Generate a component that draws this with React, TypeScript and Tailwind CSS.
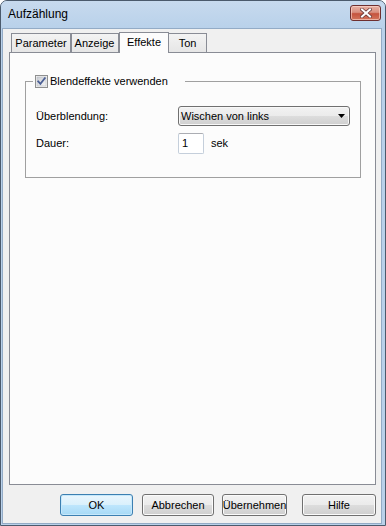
import React from "react";

function Checkbox() {
  return (
    <svg width="13" height="13" viewBox="0 0 13 13" className="block">
      <defs>
        <linearGradient id="cbg" x1="0" y1="0" x2="1" y2="1">
          <stop offset="0" stopColor="#c9ccd2" />
          <stop offset="1" stopColor="#f6f6f6" />
        </linearGradient>
      </defs>
      <rect x="0.5" y="0.5" width="12" height="12" fill="#f4f4f4" stroke="#8e8f8f" />
      <rect x="2" y="2" width="9" height="9" fill="url(#cbg)" stroke="#b8bcc4" strokeWidth="0.6" />
      <path d="M3.2 6.4 L5.4 8.8 L9.8 3.2" fill="none" stroke="#4b5f95" strokeWidth="1.8" strokeLinecap="square" />
    </svg>
  );
}

function CloseGlyph() {
  return (
    <svg width="12" height="10" viewBox="0 0 12 10" className="block">
      <path d="M2 1.5 L10 8.5 M10 1.5 L2 8.5" stroke="#6b3b3b" strokeWidth="3.6" strokeLinecap="square" />
      <path d="M2 1.5 L10 8.5 M10 1.5 L2 8.5" stroke="#ffffff" strokeWidth="2" strokeLinecap="square" />
    </svg>
  );
}

const btn =
  "h-[22px] flex items-center justify-center rounded-[3px] border border-[#707070] bg-[linear-gradient(to_bottom,#f2f2f2_0%,#ebebeb_50%,#dddddd_50%,#cfcfcf_100%)] shadow-[inset_0_0_0_1px_#fbfbfb] text-[11px] text-black";

export default function App() {
  return (
    <div className="w-[386px] h-[526px] bg-white [font-family:'Liberation_Sans',Arial,sans-serif]">
      <div className="w-[386px] h-[526px] flex flex-col border border-[#4b5a6c] rounded-t-[7px] bg-[#b9d1ea] overflow-hidden">
        {/* Title bar */}
        <div className="h-[27px] flex items-start pl-[7px] pr-[4px] bg-[linear-gradient(to_bottom,#c7daee,#b9d1ea)]">
          <div className="mt-[6px] text-[12px] leading-[15px] text-black">Aufzählung</div>
          <div className="ml-auto mt-[4px] w-[31px] h-[16px] rounded-[3px] border border-[#6e2f2f] bg-[linear-gradient(to_bottom,#e8b1a4_0%,#d99080_45%,#c5533e_55%,#d3755c_100%)] shadow-[inset_0_0_0_1px_rgba(255,220,210,0.6)] flex items-center justify-center">
            <CloseGlyph />
          </div>
        </div>

        {/* Client area */}
        <div className="flex-1 ml-[1px] mr-[3px] mb-[1px] border border-[#93abc6] bg-[#f0f0f0] flex flex-col text-[11px] text-black">
          <div className="pt-[3px] pl-[6px] pr-[5px]">
            {/* Tabs */}
            <div className="relative z-10 -mb-px h-[21px] flex items-end pl-[2px]">
              <div className="w-[60px] h-[20px] border border-[#898c95] bg-[linear-gradient(to_bottom,#f3f3f3,#e6e6e6)] flex items-center justify-center leading-[13px]">
                Parameter
              </div>
              <div className="w-[48px] h-[20px] border border-l-0 border-[#898c95] bg-[linear-gradient(to_bottom,#f3f3f3,#e6e6e6)] flex items-center justify-center leading-[13px] shadow-[inset_1px_0_0_#898c95]">
                Anzeige
              </div>
              <div className="w-[50px] h-[21px] border border-b-0 border-[#898c95] bg-[#fcfcfc] flex items-center justify-center pb-[2px] leading-[13px]">
                Effekte
              </div>
              <div className="w-[38px] h-[20px] border border-l-0 border-[#898c95] bg-[linear-gradient(to_bottom,#f3f3f3,#e6e6e6)] flex items-center justify-center leading-[13px]">
                Ton
              </div>
            </div>

            {/* Pane */}
            <div className="h-[433px] border border-[#898c95] bg-[#fcfcfc] pt-[28px] pl-[15px] pr-[14px]">
              <div className="relative h-[97px] border border-[#a0a0a0] pt-[24px] pl-[10px]">
                <div className="absolute left-[7px] -top-[8px] w-[152px] h-[14px] bg-[#fcfcfc] flex items-center pl-[2px]">
                  <Checkbox />
                  <span className="ml-[2px] leading-[13px]">Blendeffekte verwenden</span>
                </div>
                <div className="flex items-center h-[20px]">
                  <div className="w-[142px] leading-[13px]">Überblendung:</div>
                  <div className="w-[172px] h-[20px] rounded-[3px] border border-[#707070] bg-[linear-gradient(to_bottom,#f2f2f2_0%,#ebebeb_50%,#dddddd_50%,#cfcfcf_100%)] shadow-[inset_0_0_0_1px_#f8f8f8] flex items-center pl-[2px] pr-[4px]">
                    <span className="leading-[13px]">Wischen von links</span>
                    <svg width="7" height="4" viewBox="0 0 7 4" className="ml-auto block">
                      <polygon points="0,0 7,0 3.5,4" fill="#000" />
                    </svg>
                  </div>
                </div>
                <div className="flex items-center h-[21px] mt-[7px]">
                  <div className="w-[142px] leading-[13px]">Dauer:</div>
                  <div className="w-[26px] h-[21px] rounded-[2px] border border-[#c5cfdb] border-t-[#abadb3] bg-white flex items-center pl-[3px] leading-[13px]">
                    1
                  </div>
                  <div className="ml-[7px] leading-[13px]">sek</div>
                </div>
              </div>
            </div>
          </div>

          {/* Buttons */}
          <div className="mt-[9px] flex">
            <div className="ml-[57px] w-[73px] h-[22px] flex items-center justify-center rounded-[3px] border border-[#3c7fb1] bg-[linear-gradient(to_bottom,#eaf6fd_0%,#d9f0fc_50%,#bee6fd_50%,#a7d9f5_100%)] shadow-[inset_0_0_0_1px_#c6e8fb]">
              OK
            </div>
            <div className={"ml-[9px] w-[72px] " + btn}>Abbrechen</div>
            <div className={"ml-[8px] w-[65px] " + btn}>Übernehmen</div>
            <div className={"ml-[15px] w-[74px] " + btn}>Hilfe</div>
          </div>
        </div>
      </div>
    </div>
  );
}
